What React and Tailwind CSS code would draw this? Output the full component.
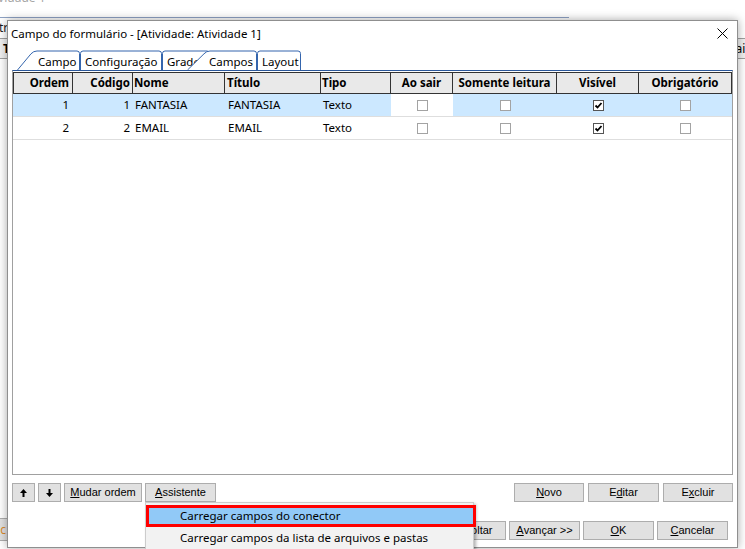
import React from 'react';

const UI = "font-['Noto_Sans',sans-serif]";
const BTN = "font-['Liberation_Sans',Arial,sans-serif]";

const columns = [
  { key: 'ordem', label: 'Ordem', width: 'w-[59px]', head: 'justify-end pr-[3px]', body: 'justify-end pr-[4px]' },
  { key: 'codigo', label: 'Código', width: 'w-[60px]', head: 'justify-end pr-[2px]', body: 'justify-end pr-[3px]' },
  { key: 'nome', label: 'Nome', width: 'w-[92px]', head: 'justify-start pl-[1px]', body: 'justify-start pl-[2px]' },
  { key: 'titulo', label: 'Título', width: 'w-[96px]', head: 'justify-start pl-[2px]', body: 'justify-start pl-[3px]' },
  { key: 'tipo', label: 'Tipo', width: 'w-[70px]', head: 'justify-start pl-[1px]', body: 'justify-start pl-[2px]' },
  { key: 'aoSair', label: 'Ao sair', width: 'w-[62px]', head: 'justify-center', body: 'justify-center', check: true },
  { key: 'leitura', label: 'Somente leitura', width: 'w-[104px]', head: 'justify-center', body: 'justify-center', check: true },
  { key: 'visivel', label: 'Visível', width: 'w-[82px]', head: 'justify-center', body: 'justify-center', check: true },
  { key: 'obrigatorio', label: 'Obrigatório', width: 'w-[93px]', head: 'justify-center', body: 'justify-center', check: true },
];

const rows = [
  { ordem: 1, codigo: 1, nome: 'FANTASIA', titulo: 'FANTASIA', tipo: 'Texto', aoSair: false, leitura: false, visivel: true, obrigatorio: false },
  { ordem: 2, codigo: 2, nome: 'EMAIL', titulo: 'EMAIL', tipo: 'Texto', aoSair: false, leitura: false, visivel: true, obrigatorio: false },
];

function Check({ checked }) {
  return (
    <span className={`w-[11px] h-[11px] border bg-white flex items-center justify-center ${checked ? 'border-[#555555]' : 'border-[#a3a3a3]'}`}>
      {checked && (
        <svg width="9" height="9" viewBox="0 0 9 9">
          <path d="M1.5 4.5 L3.5 6.5 L7.5 2" stroke="#000" strokeWidth="1.8" fill="none" />
        </svg>
      )}
    </span>
  );
}

function Btn({ className = '', children }) {
  return (
    <div className={`h-[19px] flex items-center justify-center bg-[#e1e1e1] border border-[#adadad] text-[11px] leading-none text-black ${BTN} ${className}`}>
      {children}
    </div>
  );
}

// tab outlines are drawn, labels stay text
function Tab({ width, path, pad, label, fill = false, className = '' }) {
  return (
    <div className={`relative h-[20px] shrink-0 ${width} ${className}`}>
      <svg className="absolute inset-0" width="100%" height="20" viewBox={`0 0 ${parseInt(width.slice(3))} 20`}>
        <path d={path} fill={fill ? '#ffffff' : 'none'} stroke="#3465ad" strokeWidth="1" />
      </svg>
      <span className={`relative block pt-[4px] leading-[16px] whitespace-nowrap overflow-hidden ${pad}`}>{label}</span>
    </div>
  );
}

function Tabs() {
  return (
    <div className="flex h-[20px] ml-[9px] text-[11.5px]">
      <Tab width="w-[63px]" pad="pl-[21px]" label="Campo" path="M0.5,20 L14,3.8 Q16.5,1 20,1 L60,1 Q62.5,1 62.5,3.5 L62.5,20" />
      <Tab width="w-[82px]" pad="pl-[5px]" label="Configuração" path="M0.5,20 L0.5,3.5 Q0.5,1 3,1 L79,1 Q81.5,1 81.5,3.5 L81.5,20" />
      <Tab width="w-[48px]" pad="pl-[5px]" label="Grade" path="M0.5,20 L0.5,3.5 Q0.5,1 3,1 L45,1 Q47.5,1 47.5,3.5 L47.5,20" />
      <Tab width="w-[70px]" className="-ml-[23px] z-10" fill pad="pl-[22px]" label="Campos" path="M0.5,20 L17,3.8 Q19.5,1 23,1 L67,1 Q69.5,1 69.5,3.5 L69.5,20" />
      <Tab width="w-[44px]" pad="pl-[5px]" label="Layout" path="M0.5,20 L0.5,3.5 Q0.5,1 3,1 L41,1 Q43.5,1 43.5,3.5 L43.5,20" />
    </div>
  );
}

function Grid() {
  return (
    <div className="mx-[4px] h-[405px] border-t border-t-[#2b579a] border-x border-b border-x-[#a0a0a0] border-b-[#a0a0a0] bg-white pt-[1px] text-[11.5px]">
      <div className="flex h-[22px] border-y border-l border-[#333333] bg-[#e9e9e9] font-bold">
        {columns.map((c) => (
          <div key={c.key} className={`flex items-center border-r border-[#333333] whitespace-nowrap ${c.width} ${c.head}`}>
            {c.label}
          </div>
        ))}
      </div>
      {rows.map((r, i) => (
        <div key={r.ordem} className={`flex h-[23px] border-b border-[#dedede] ${i === 0 ? 'bg-[#cce8ff]' : 'bg-white'}`}>
          <div className="w-[1px]" />
          {columns.map((c) => (
            <div
              key={c.key}
              className={`flex items-center whitespace-nowrap ${c.width} ${c.body} ${i === 0 && c.key === 'aoSair' ? 'bg-white' : ''}`}
            >
              {c.check ? <Check checked={r[c.key]} /> : r[c.key]}
            </div>
          ))}
        </div>
      ))}
    </div>
  );
}

function ArrowIcon({ down = false }) {
  return (
    <svg width="7" height="8" viewBox="0 0 7 8" className={down ? 'rotate-180' : ''}>
      <polygon points="3.5,0 7,4 4.5,4 4.5,8 2.5,8 2.5,4 0,4" fill="#000" />
    </svg>
  );
}

function Dialog() {
  return (
    <div className={`absolute left-[7px] top-[20px] w-[731px] bg-white border border-[#8f8f8f] shadow-[0_0_9px_rgba(0,0,0,0.35)] pb-[7px] text-black ${UI}`}>
      {/* title bar */}
      <div className="h-[29px] flex justify-between">
        <span className="pl-[3px] pt-[5px] leading-[16px] text-[11.5px]">Campo do formulário - [Atividade: Atividade 1]</span>
        <svg className="mt-[7px] mr-[9px]" width="11" height="11" viewBox="0 0 11 11">
          <path d="M0.5 0.5 L10.5 10.5 M10.5 0.5 L0.5 10.5" stroke="#000" strokeWidth="1" />
        </svg>
      </div>

      <Tabs />
      <Grid />

      <div className="mt-[8px] mx-[4px] flex justify-between">
        <div className="flex gap-[3px]">
          <Btn className="w-[23px]"><ArrowIcon /></Btn>
          <Btn className="w-[23px]"><ArrowIcon down /></Btn>
          <Btn className="w-[78px]"><span className="underline underline-offset-[1px]">M</span>udar ordem</Btn>
          <Btn className="w-[71px]"><span className="underline underline-offset-[1px]">A</span>ssistente</Btn>
        </div>
        <div className="flex gap-[4px]">
          <Btn className="w-[70px]"><span className="underline underline-offset-[1px]">N</span>ovo</Btn>
          <Btn className="w-[71px]">E<span className="underline underline-offset-[1px]">d</span>itar</Btn>
          <Btn className="w-[70px]">E<span className="underline underline-offset-[1px]">x</span>cluir</Btn>
        </div>
      </div>

      <div className="mt-[19px] pr-[9px] flex justify-end gap-[3px]">
        <Btn className="w-[71px]">&lt;&lt; Voltar</Btn>
        <Btn className="w-[71px]"><span className="underline underline-offset-[1px]">A</span>vançar &gt;&gt;</Btn>
        <Btn className="w-[71px]"><span className="underline underline-offset-[1px]">O</span>K</Btn>
        <Btn className="w-[71px]"><span className="underline underline-offset-[1px]">C</span>ancelar</Btn>
      </div>
    </div>
  );
}

function AssistantMenu() {
  return (
    <div className={`absolute left-[145px] top-[502px] w-[329px] h-[60px] bg-[#f2f2f2] border border-[#cccccc] shadow-[2px_2px_3px_rgba(0,0,0,0.3)] pt-[2px] text-[11.5px] text-black ${UI}`}>
      <div className="w-[330px] h-[22px] border-[3px] border-[#ff0000] bg-[#91c9f7] pl-[31px] flex items-center">
        Carregar campos do conector
      </div>
      <div className="h-[22px] pl-[34px] flex items-center">Carregar campos da lista de arquivos e pastas</div>
    </div>
  );
}

function ParentWindow() {
  return (
    <div className={`h-[549px] flex flex-col bg-white text-[12px] ${UI}`}>
      <div className="h-[17px] overflow-hidden">
        <div className="-mt-[10px] -ml-[17px] leading-[16px] text-[#a6a6a6]">Atividade 1</div>
      </div>
      <div className="w-[569px] h-[1px] bg-[#8ea2c4]" />
      <div className="h-[20px] flex items-center justify-between">
        <span className="-ml-[1px] text-[#1a1a1a]">tr</span>
      </div>
      <div className="h-[21px] flex items-center justify-between border-y border-[#a0a0a0] bg-[#f0f0f0]">
        <span className="pl-[3px] font-bold">T</span>
        <span className="-mr-[6px] border-l border-[#a0a0a0] pl-[2px]">ais</span>
      </div>
      <div className="flex-1" />
      <div className="mb-[8px] flex">
        <div className="-ml-[40px] w-[48px] h-[23px] border border-[#adadad] bg-[#e1e1e1] flex items-center justify-end pr-[1px] text-[12px]">
          <span className="text-[#1e3f74]">r</span><span className="ml-[2px] text-[#d88a2a]">c</span>
        </div>
      </div>
    </div>
  );
}

export default function App() {
  return (
    <div className="relative w-[745px] h-[549px] overflow-hidden bg-white">
      <ParentWindow />
      <Dialog />
      <AssistantMenu />
    </div>
  );
}
